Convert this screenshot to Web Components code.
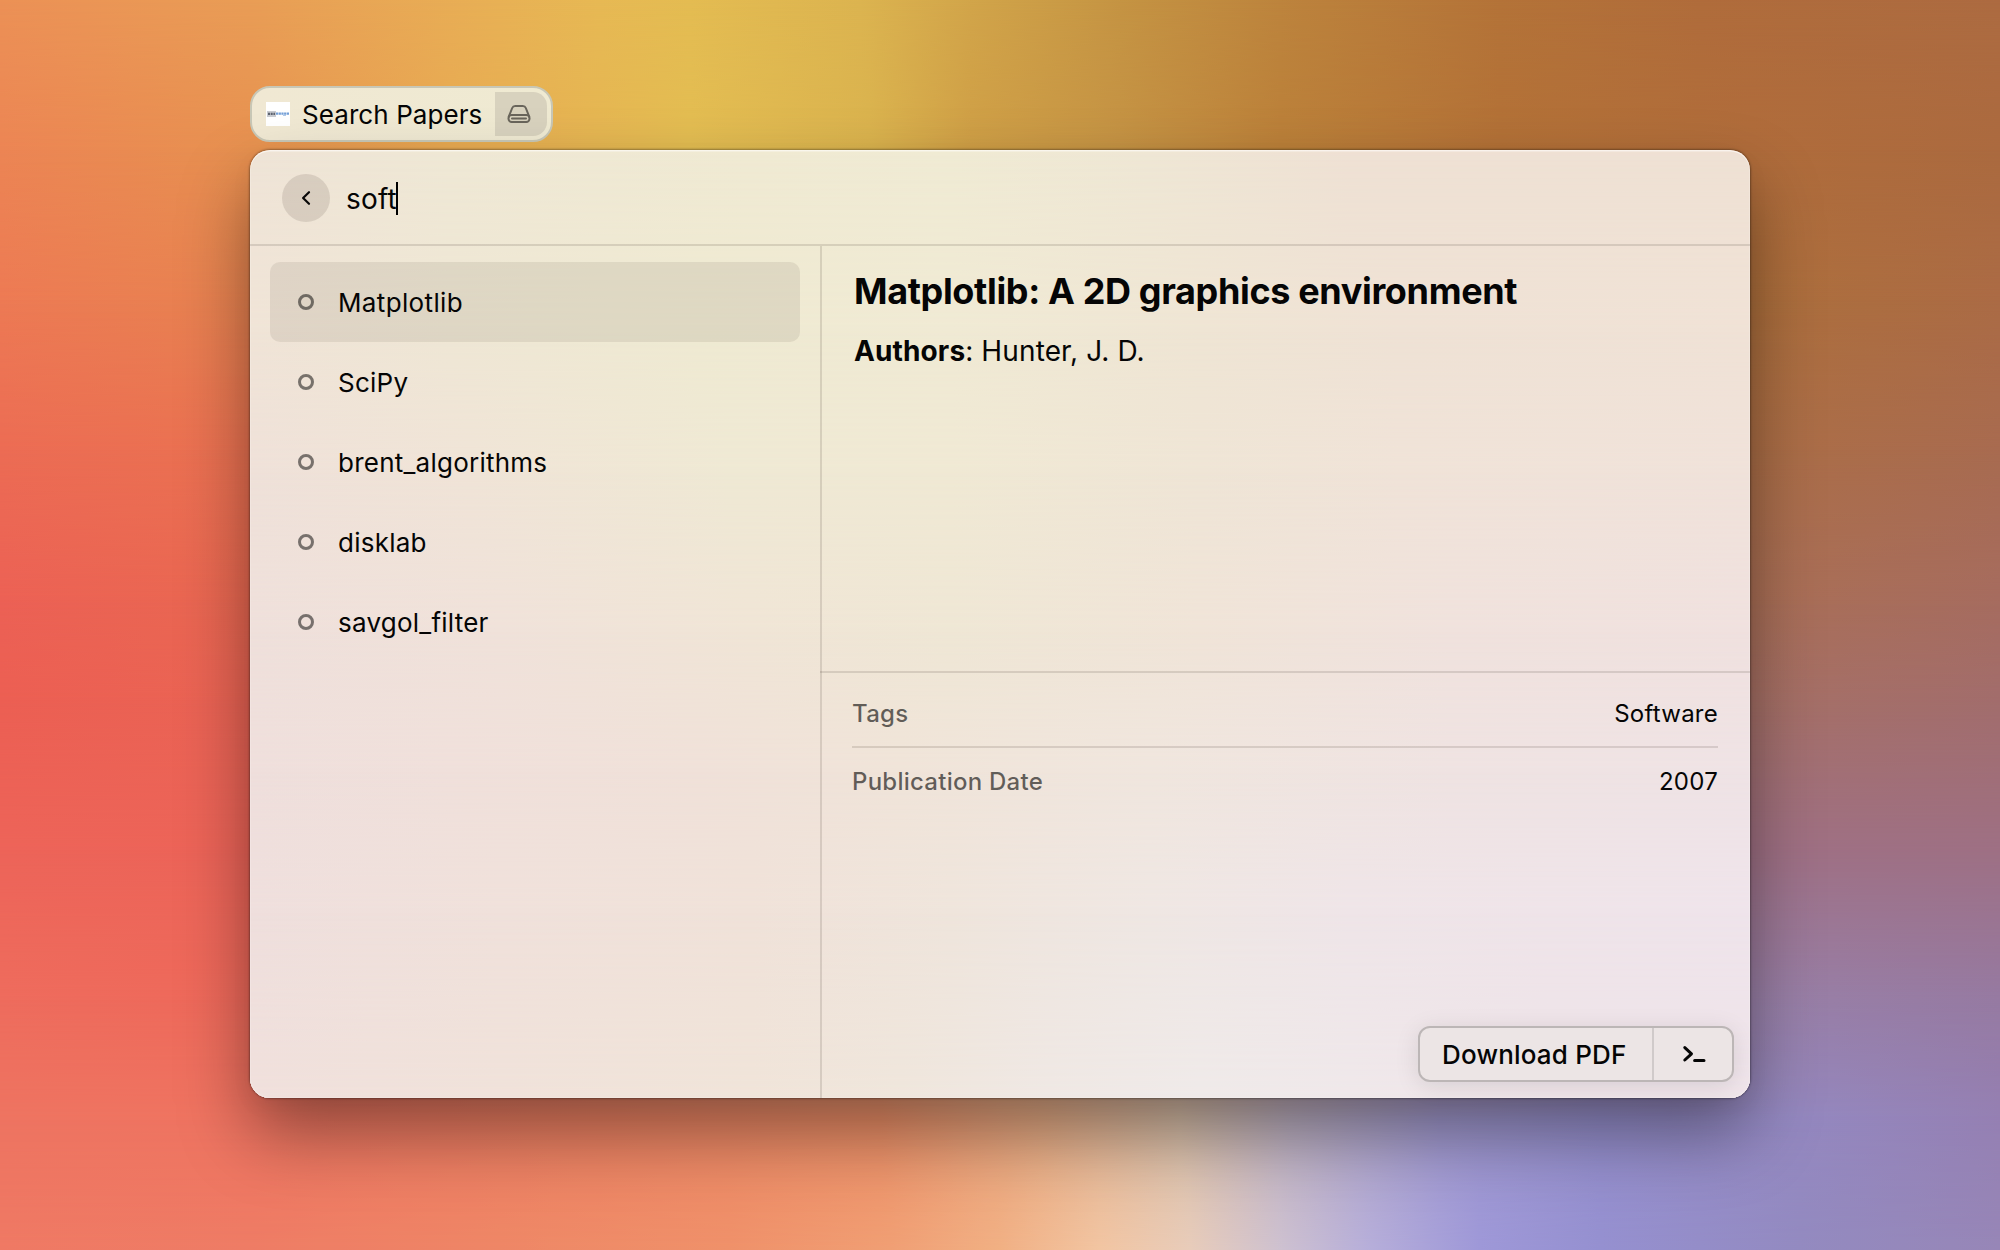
<!DOCTYPE html>
<html lang="en">
<head>
<meta charset="utf-8">
<title>Search Papers</title>
<style>
html,body{margin:0;padding:0;width:2000px;height:1250px;overflow:hidden}
body{font-family:Inter,"Liberation Sans",sans-serif;color:#050505}
</style>
</head>
<body>
<launcher-desktop>
  <command-chip>Search Papers</command-chip>
  <launcher-window>
    <search-bar slot="header">soft</search-bar>
    <paper-list slot="list">
      <paper-row selected>Matplotlib</paper-row>
      <paper-row>SciPy</paper-row>
      <paper-row>brent_algorithms</paper-row>
      <paper-row>disklab</paper-row>
      <paper-row>savgol_filter</paper-row>
    </paper-list>
    <paper-detail slot="detail">
      <span slot="title">Matplotlib: A 2D graphics environment</span>
      <b slot="label">Authors</b><span slot="authors">: Hunter, J. D.</span>
      <meta-row slot="meta" label="Tags">Software</meta-row>
      <meta-row slot="meta" label="Publication Date">2007</meta-row>
    </paper-detail>
    <action-bar slot="actions">Download PDF</action-bar>
  </launcher-window>
</launcher-desktop>
<script>
const define = (name, html, setup) => customElements.define(name, class extends HTMLElement {
  connectedCallback() {
    if (this.shadowRoot) return;
    const root = this.attachShadow({ mode: 'open' });
    root.innerHTML = html;
    if (setup) setup(this, root);
  }
});

// Each row is [y, [x, colour], ...]; rows are blended vertically into a smooth mesh.
const mesh = (root, rows) => {
  const box = root.querySelector('.mesh');
  rows.forEach((row, i) => {
    const [y, ...stops] = row;
    const layer = document.createElement('div');
    layer.style.background = `linear-gradient(90deg,${stops.map(([x, c]) => `${c} ${x}px`).join(',')})`;
    if (i) layer.style.maskImage = `linear-gradient(180deg,transparent ${rows[i - 1][0]}px,#000 ${y}px)`;
    box.append(layer);
  });
};
const meshStyle = `.mesh{position:absolute;inset:0;overflow:hidden;border-radius:inherit}.mesh div{position:absolute;inset:0}`;

define('launcher-desktop', `
<style>
:host{display:flex;flex-direction:column;align-items:flex-start;gap:8px;position:relative;box-sizing:border-box;width:2000px;height:1250px;padding:86px 250px 0;isolation:isolate}
${meshStyle}
.mesh{z-index:-1}
</style><div class="mesh"></div><slot></slot>`, (el, root) => mesh(root, [
  [0, [0,'#ec9156'],[250,'#e99d56'],[500,'#e8b155'],[600,'#e7b954'],[690,'#e4bc52'],[860,'#dcb450'],[970,'#d2a54a'],[1120,'#c59443'],[1280,'#bd843d'],[1500,'#b47338'],[1700,'#b06c3b'],[2000,'#ad6b41']],
  [150, [0,'#ec8554'],[250,'#e79150'],[450,'#e8aa52'],[690,'#e3bd52'],[870,'#dab34e'],[970,'#cf9f46'],[1120,'#c59344'],[1280,'#bb8039'],[1500,'#b37137'],[1750,'#b06c3b'],[2000,'#ab6a3f']],
  [300, [0,'#ed7a54'],[250,'#e78350'],[1000,'#cf9f50'],[1750,'#ad6f3c'],[2000,'#ab6b45']],
  [450, [0,'#ec6c54'],[250,'#ea7251'],[1000,'#d0a060'],[1750,'#ac6e46'],[2000,'#a86b50']],
  [600, [0,'#ec6155'],[250,'#e96851'],[1000,'#d0a080'],[1750,'#aa6f56'],[2000,'#a66c5f']],
  [700, [0,'#ec5f53'],[250,'#ea6454'],[1000,'#d0a090'],[1750,'#a67066'],[2000,'#a26d6c']],
  [850, [0,'#ed6459'],[250,'#ec6458'],[1000,'#e0b0a0'],[1750,'#9f7084'],[2000,'#9e7084']],
  [1000,[0,'#ee6c5d'],[250,'#ee695a'],[1000,'#efb898'],[1750,'#9980a8'],[2000,'#967aa2']],
  [1120,[0,'#ee7461'],[250,'#ef7461'],[600,'#ee8263'],[880,'#ee9068'],[1040,'#e8ac85'],[1180,'#d9bfa9'],[1290,'#bdb0c2'],[1440,'#a29ad0'],[1600,'#968fcd'],[1800,'#9488c0'],[2000,'#9580b3']],
  [1250,[0,'#ef7964'],[250,'#ee7c65'],[500,'#ee8766'],[730,'#ef916a'],[890,'#f09f74'],[1000,'#f1b084'],[1100,'#f2c5a2'],[1190,'#e8ccba'],[1280,'#cec1d0'],[1370,'#b6aeda'],[1480,'#9e98d8'],[1600,'#9590d0'],[1800,'#938ac0'],[2000,'#9786b7']]
]));

define('command-chip', `
<style>
:host{display:flex;align-items:center;box-sizing:border-box;width:303px;height:56px;padding:4px 4px 4px 14px;border:2px solid #c8c7b6;border-radius:20px;background:linear-gradient(90deg,#f0e8d3,#efead2);font-size:26px;letter-spacing:.08px}
.logo{flex:none;margin-right:12px}
.tail{display:flex;align-items:center;justify-content:center;box-sizing:border-box;margin-left:auto;padding-right:4px;width:52px;height:44px;border-radius:0 14px 14px 0;background:#d8d2be}
</style>
<svg class="logo" width="24" height="24" viewBox="0 0 24 24"><path fill="#fff" d="M0 0h24v24H0z"/><path fill="#c9cbd0" d="M1 9h9v6H1z"/><path stroke="#5e6470" stroke-width="2.2" stroke-dasharray="2 .7" d="M2 11.8h7"/><path stroke="#74a0d8" stroke-width="2.2" stroke-dasharray="2.2 .5" d="M10 11.6h13"/><path stroke="#9dbde4" d="M17 13.3h3"/></svg>
<slot></slot>
<span class="tail"><svg width="24" height="20" viewBox="0 0 24 20" fill="none" stroke="#69655b" stroke-width="2" stroke-linecap="round" stroke-linejoin="round"><rect x="1.5" y="11" width="21" height="7" rx="3.2"/><path d="M1.8 12.6 5.2 4Q6 1.9 8.2 1.9h7.6q2.2 0 3 2.1l3.4 8.6M5 14.5h14"/></svg></span>`);

define('launcher-window', `
<style>
:host{display:flex;flex-direction:column;position:relative;isolation:isolate;width:1500px;height:948px;border-radius:20px;box-shadow:0 0 2px 1px rgba(0,0,0,.32),0 36px 70px rgba(0,0,0,.4),0 8px 24px rgba(0,0,0,.04);--line:rgba(70,55,45,.15)}
${meshStyle}
.mesh{z-index:-1}
.mesh::after{content:"";position:absolute;inset:0;border-radius:20px;box-shadow:inset 0 1.5px 0 rgba(255,255,255,.5),inset 0 0 0 1px rgba(255,255,255,.18)}
header{height:94px;border-bottom:2px solid var(--line)}
main{display:flex;flex:1;min-height:0}
.side{width:570px;border-right:2px solid var(--line)}
.detail{flex:1;min-width:0}
.actions{position:absolute;right:16px;bottom:16px}
</style>
<div class="mesh"></div>
<header><slot name="header"></slot></header>
<main><div class="side"><slot name="list"></slot></div><div class="detail"><slot name="detail"></slot></div></main>
<div class="actions"><slot name="actions"></slot></div>`, (el, root) => mesh(root, [
  [0,  [0,'#efe4d7'],[200,'#efe8d5'],[500,'#f0ead3'],[700,'#f0ebd4'],[900,'#efe7d5'],[1100,'#efe1d4'],[1500,'#efe1d4']],
  [180,[0,'#f0e4d7'],[200,'#efe7d5'],[450,'#efead2'],[700,'#f0ead4'],[950,'#efe5d4'],[1150,'#efe2d5'],[1500,'#f0e2d6']],
  [320,[0,'#efe1d9'],[220,'#f0e4d7'],[480,'#efe9d4'],[700,'#f0e9d4'],[950,'#efe5d6'],[1150,'#f0e3d8'],[1500,'#f0e2da']],
  [480,[0,'#efe0db'],[250,'#f0e2da'],[500,'#f0e5d6'],[700,'#efe7d5'],[950,'#f0e4d8'],[1200,'#f0e2dd'],[1500,'#f0e1df']],
  [620,[0,'#efdfdc'],[200,'#f0e0db'],[450,'#f0e1d9'],[650,'#f0e4d9'],[900,'#f0e6de'],[1200,'#efe3e2'],[1500,'#efe3e5']],
  [760,[0,'#efdfdd'],[250,'#f0e1db'],[500,'#f0e2d9'],[700,'#efe5dc'],[900,'#efe7e3'],[1100,'#efe5e8'],[1300,'#efe4e9'],[1500,'#efe4eb']],
  [948,[0,'#f0e0dc'],[250,'#f0e2da'],[500,'#f0e4d9'],[650,'#efe6dc'],[800,'#efe8e4'],[950,'#efeae9'],[1100,'#efe8ea'],[1300,'#efe4e9'],[1500,'#efe4ea']]
]));

define('search-bar', `
<style>
:host{display:flex;align-items:center;box-sizing:border-box;height:94px;padding:2px 0 0 32px;font-size:28px;letter-spacing:.2px}
.back{display:flex;align-items:center;justify-content:center;width:48px;height:48px;margin-right:16px;border-radius:50%;background:rgba(60,50,40,.13)}
.caret{width:2px;height:33px;margin:1px 0 0 -1px;background:#000}
.text{padding-top:2px}
</style>
<span class="back"><svg width="16" height="20" viewBox="0 0 16 20" fill="none" stroke="#090909" stroke-width="2.2" stroke-linecap="round" stroke-linejoin="round"><path d="M11 4.2 5.1 10l5.9 5.8"/></svg></span>
<span class="text"><slot></slot></span><span class="caret"></span>`);

define('paper-list', `
<style>:host{display:flex;flex-direction:column;padding:16px 20px}</style><slot></slot>`);

define('paper-row', `
<style>
:host{display:flex;align-items:center;gap:24px;height:80px;padding-left:28px;border-radius:10px;font-size:26px;letter-spacing:.24px}
:host([selected]){background:rgba(50,42,30,.09);letter-spacing:.36px}
i{box-sizing:border-box;width:16px;height:16px;border:3px solid rgba(0,0,0,.5);border-radius:50%}
span{padding-top:1px}
</style><i></i><span><slot></slot></span>`);

define('paper-detail', `
<style>
:host{display:flex;flex-direction:column}
.body{display:flex;flex-direction:column;gap:17px;box-sizing:border-box;height:425px;padding:23px 32px 0}
h1{margin:0;font-size:36px;line-height:44px;font-weight:700;letter-spacing:-.35px}
p{margin:0;font-size:28px;line-height:42px;letter-spacing:.12px}
.meta{display:flex;flex-direction:column;padding:6px 32px;margin-left:-2px;border-top:2px solid var(--line)}
</style>
<div class="body"><h1><slot name="title"></slot></h1><p><slot name="label"></slot><slot name="authors"></slot></p></div>
<div class="meta"><slot name="meta"></slot></div>`);

define('meta-row', `
<style>
:host{display:flex;align-items:center;justify-content:space-between;box-sizing:border-box;height:69px;padding-top:1px;font-size:24px;letter-spacing:.25px;border-bottom:2px solid var(--line)}
:host(:last-of-type){border-bottom:0;height:67px;padding-top:0}
.k{font-weight:500;color:rgba(0,0,0,.6)}
</style><span class="k"></span><span><slot></slot></span>`, (el, root) => {
  root.querySelector('.k').textContent = el.getAttribute('label');
});

define('action-bar', `
<style>
:host{display:flex;box-sizing:border-box;width:316px;height:56px;border:2px solid #bcb6b6;border-radius:12px;background:#ece5e5;box-shadow:0 4px 24px rgba(0,0,0,.1);font-size:26px;font-weight:500;letter-spacing:.18px}
.main{display:flex;align-items:center;box-sizing:border-box;width:234px;padding-left:22px;border-right:2px solid #d0caca}
.more{display:flex;flex:1;align-items:center;justify-content:center;padding-left:1px}
</style>
<span class="main"><slot></slot></span>
<span class="more"><svg width="24" height="20" viewBox="0 0 24 20" fill="none" stroke="#050505" stroke-width="3" stroke-linecap="round" stroke-linejoin="round"><path d="M2.8 3.6 9.5 9.8l-6.7 6.2M12.6 16.5h9.4"/></svg></span>`);
</script>
</body>
</html>
